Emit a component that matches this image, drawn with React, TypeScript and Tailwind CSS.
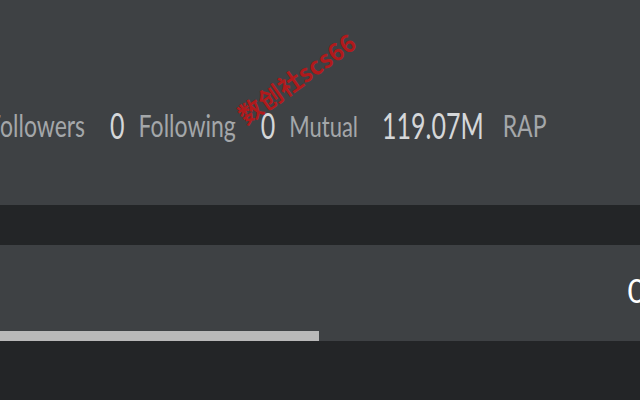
export default function App() {
  return (
    <div
      className="relative w-[640px] h-[400px] overflow-hidden bg-[#232527]"
      style={{ fontFamily: "Lato, 'Open Sans', sans-serif" }}
    >
      {/* header stats */}
      <div className="h-[205px] bg-[#3e4144] flex items-start pt-[108px]">
        <div className="flex items-center h-[34px] ml-[-12px]">
          <span className="text-[23px] text-[#a4a7aa] scale-y-[1.3]">Followers</span>
          <span className="ml-[25px] text-[25px] text-[#d5d7d9] scale-y-[1.5]">0</span>
          <span className="ml-[14px] text-[23px] text-[#a4a7aa] scale-y-[1.3]">Following</span>
          <span className="ml-[25px] text-[25px] text-[#d5d7d9] scale-y-[1.5]">0</span>
          <span className="ml-[14px] text-[22px] text-[#a4a7aa] scale-y-[1.35]">Mutual</span>
          <span className="ml-[24px] text-[25px] text-[#d5d7d9] scale-y-[1.5]">119.07M</span>
          <span className="ml-[19px] text-[23px] text-[#a4a7aa] scale-y-[1.3]">RAP</span>
        </div>
      </div>

      {/* tab strip */}
      <div className="h-[40px] bg-[#232527]" />

      {/* panel */}
      <div className="h-[96px] bg-[#3e4144] flex flex-col">
        <div className="flex-1 flex items-center justify-end pt-[6px]">
          <span className="mr-[-6px] text-[32px] text-white">0</span>
        </div>
        <div className="h-[10px] w-[319px] bg-[#b9b9b9]" />
      </div>

      {/* watermark */}
      <div
        className="absolute left-[228px] top-[60px] -rotate-[35deg] text-[24px] font-bold text-[#b01a1c] whitespace-nowrap"
        style={{ fontFamily: "'Noto Sans CJK SC', 'DejaVu Sans', sans-serif" }}
      >
        数创社scs66
      </div>
    </div>
  );
}
